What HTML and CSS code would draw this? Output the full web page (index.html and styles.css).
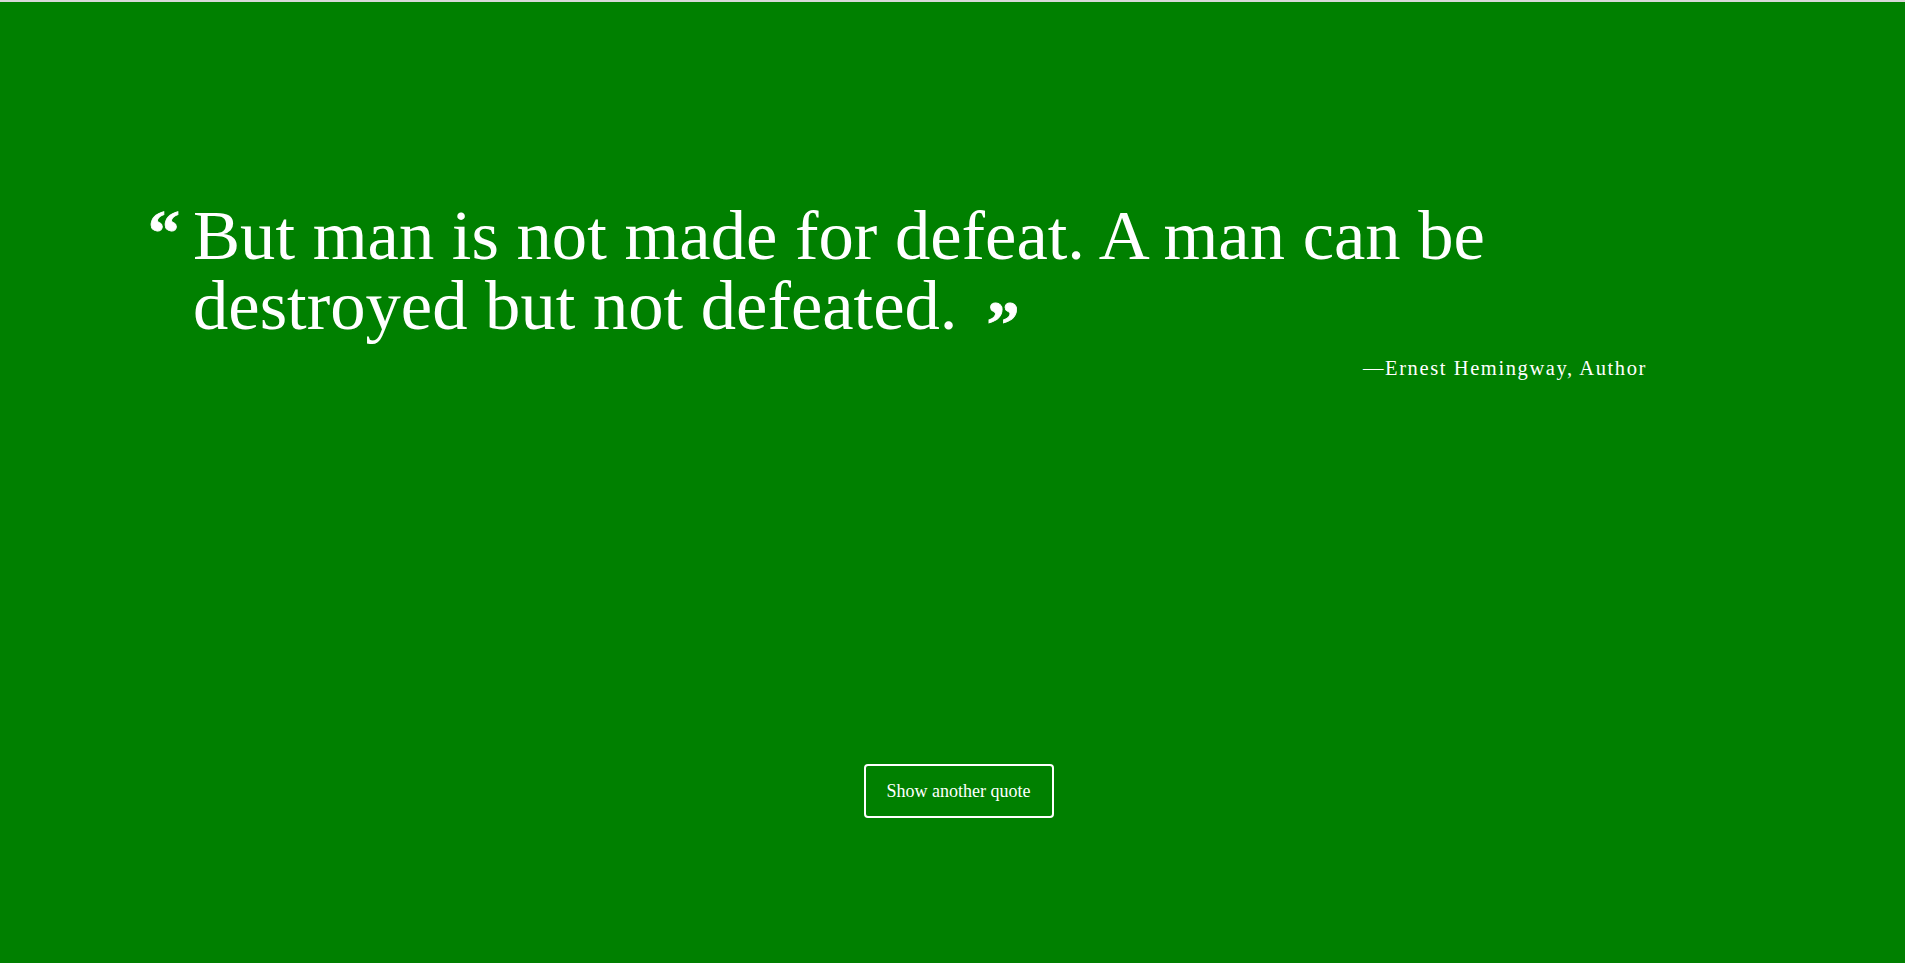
FILE: index.html
```html
<!DOCTYPE html>
<html lang="en">
<head>
<meta charset="utf-8">
<title>Random Quote Machine</title>
<link rel="stylesheet" href="styles.css">
</head>
<body>
<div class="page">
  <main class="quote-box">
    <blockquote class="quote">
      <span class="mark open">&ldquo;</span>
      <p class="text">But man is not made for defeat. A man can be destroyed but not defeated.<span class="mark close">&rdquo;</span></p>
    </blockquote>
    <p class="author">&mdash;Ernest Hemingway, Author</p>
  </main>
  <div class="actions">
    <button class="new-quote" type="button">Show another quote</button>
  </div>
</div>
</body>
</html>
```
FILE: styles.css
```css
html, body {
  margin: 0;
  padding: 0;
}
body {
  background: #008000;
  color: #ffffff;
  font-family: "Liberation Serif", "DejaVu Serif", serif;
  height: 963px;
  overflow: hidden;
}
.page {
  border-top: 2px solid #d8d8d8;
  box-sizing: border-box;
  height: 963px;
}
.quote-box {
  padding: 198px 0 0 148px;
  width: 1499px;
}
.quote {
  margin: 0;
  display: flex;
  align-items: flex-start;
}
.mark {
  font-weight: bold;
  font-size: 66px;
  -webkit-text-stroke: 0.8px #ffffff;
}
.open {
  width: 45px;
  flex: none;
  line-height: 1;
  margin-top: 1px;
  font-size: 64px;
}
.close {
  line-height: 0;
  margin-left: 29px;
  vertical-align: -17px;
}
.text {
  margin: 0;
  font-size: 70.6px;
  line-height: 70px;
  width: 1360px;
  font-weight: normal;
}
.author {
  margin: 17px 0 0;
  text-align: right;
  font-size: 20.5px;
  letter-spacing: 1.6px;
}
.actions {
  display: flex;
  justify-content: center;
  padding: 384px 0 0 12px;
}
.new-quote {
  width: 190px;
  height: 54px;
  background: transparent;
  border: 2px solid #ffffff;
  border-radius: 4px;
  color: #ffffff;
  font-family: "Liberation Serif", "DejaVu Serif", serif;
  font-size: 18px;
  cursor: pointer;
}
```
